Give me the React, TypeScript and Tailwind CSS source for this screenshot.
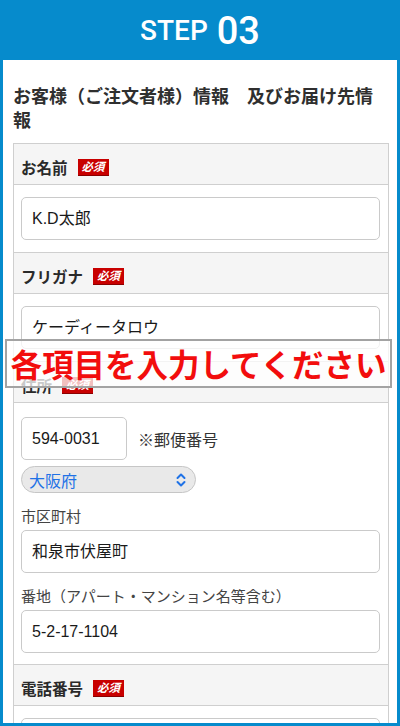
import React from "react";

const jp = { fontFamily: '"Noto Sans CJK JP", "Noto Sans", sans-serif' };
const inputFont = { fontFamily: '"Liberation Sans", "Noto Sans CJK JP", sans-serif' };

function Badge() {
  return (
    <span className="ml-[10px] inline-flex h-[17px] w-[31px] items-center justify-center bg-[#c80000] border-b border-[#8a0000] text-[11.5px] font-bold italic leading-none text-white" style={jp}>
      必須
    </span>
  );
}

function SectionHeader({ label, required = true }: { label: string; required?: boolean }) {
  return (
    <div className="flex h-[41px] items-center border-b border-[#cfcfcf] bg-[#f5f5f5] pl-[7px] pt-[6px]">
      <span className="text-[15.5px] font-bold leading-[20px] text-[#2a2a2a]" style={jp}>{label}</span>
      {required && <Badge />}
    </div>
  );
}

function TextInput({ value, className = "" }: { value: string; className?: string }) {
  return (
    <div className={`flex h-[43px] items-center rounded-[5px] border border-[#cacaca] bg-white pl-[10px] text-[16px] text-[#1a1a1a] ${className}`} style={inputFont}>
      {value}
    </div>
  );
}

function Body({ children, className = "pb-[12px] pt-[12px]" }: { children: React.ReactNode; className?: string }) {
  return <div className={`border-b border-[#cfcfcf] bg-white pl-[7px] pr-[8px] ${className}`}>{children}</div>;
}

export default function App() {
  return (
    <div className="relative h-[726px] w-[400px] overflow-hidden bg-[#068bcc]">
      <div className="flex h-[60px] items-center justify-center gap-[9px] pt-[2px] text-white" style={{ fontFamily: 'Roboto, "Liberation Sans", sans-serif' }}>
        <span className="text-[28px] font-medium leading-none">STEP</span>
        <span className="text-[38px] font-medium leading-none">03</span>
      </div>
      <div className="mx-[3px] h-[663px] overflow-hidden bg-white">
        <div className="pb-[12px] pl-[10px] pr-[8px] pt-[23px] text-[18px] font-bold leading-[24px] text-[#2f2f2f]" style={jp}>
          お客様（ご注文者様）情報　及びお届け先情報
        </div>
        <div className="ml-[10px] mr-[8px] border-l border-r border-t border-[#cfcfcf]">
          <SectionHeader label="お名前" />
          <Body>
            <TextInput value="K.D太郎" />
          </Body>
          <SectionHeader label="フリガナ" />
          <Body>
            <TextInput value="ケーディータロウ" />
          </Body>
          <SectionHeader label="住所" />
          <Body className="pb-[11px] pt-[14px]">
            <div className="flex items-center">
              <TextInput value="594-0031" className="w-[106px]" />
              <span className="ml-[11px] text-[16px] text-[#333]" style={jp}>※郵便番号</span>
            </div>
            <div className="mt-[6px] flex h-[27px] w-[175px] items-center justify-between rounded-full border border-[#c6c6c6] bg-[#e9e9e9] pl-[7px] pr-[9px]">
              <span className="text-[16px] leading-none text-[#1f72e6]" style={jp}>大阪府</span>
              <svg width="10" height="14" viewBox="0 0 10 14" fill="none" stroke="#1f72e6" strokeWidth="2" strokeLinecap="round" strokeLinejoin="round">
                <path d="M1.5 5 L5 1.5 L8.5 5" />
                <path d="M1.5 9 L5 12.5 L8.5 9" />
              </svg>
            </div>
            <div className="mb-[4px] mt-[13px] h-[20px] text-[15px] leading-[20px] text-[#444]" style={jp}>市区町村</div>
            <TextInput value="和泉市伏屋町" />
            <div className="mb-[4px] mt-[13px] h-[20px] text-[15px] leading-[20px] text-[#444]" style={jp}>番地（アパート・マンション名等含む）</div>
            <TextInput value="5-2-17-1104" />
          </Body>
          <SectionHeader label="電話番号" />
          <Body>
            <TextInput value="" />
          </Body>
        </div>
      </div>
      <div className="absolute left-[5px] top-[339px] flex h-[49px] w-[387px] items-center justify-center border-2 border-[#a3a3a3] bg-white/75">
        <span className="text-[31.5px] font-bold leading-none text-[#f20d0d]" style={jp}>各項目を入力してください</span>
      </div>
    </div>
  );
}
